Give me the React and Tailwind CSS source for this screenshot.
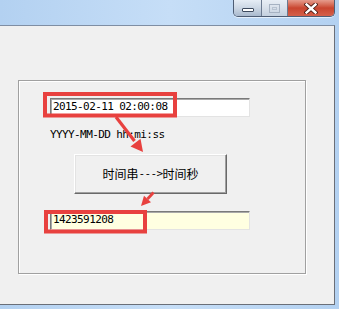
import React from "react";

const mono = { fontFamily: '"DejaVu Sans Mono", "Liberation Mono", monospace' };

function CaptionButtons() {
  return (
    <div className="flex h-[17px] rounded-b-[5px] border border-t-0 border-[#4e5d74] overflow-hidden shadow-[0_1px_0_rgba(255,255,255,0.6)]">
      <div className="flex w-[28px] items-end justify-center border-r border-[#6b7a90] bg-gradient-to-b from-[#e6edf5] via-[#ccd7e4] to-[#a9b9cd] pb-[4px]">
        <div className="h-[4px] w-[12px] rounded-[1px] border border-[#3d4a5e] bg-white" />
      </div>
      <div className="flex w-[26px] items-center justify-center border-r border-[#6b7a90] bg-gradient-to-b from-[#e8eef5] via-[#d8e0ea] to-[#c4d0de]">
        <div className="flex h-[9px] w-[11px] items-center justify-center border border-[#a6b2c2]">
          <div className="h-[3px] w-[5px] border border-[#b8c3d1]" />
        </div>
      </div>
      <div className="flex w-[46px] items-center justify-center bg-gradient-to-b from-[#e59c8d] via-[#c9452f] to-[#d4604a]">
        <svg width="14" height="11" viewBox="0 0 14 11">
          <path d="M2.5 1.5 L11.5 9.5 M11.5 1.5 L2.5 9.5" stroke="#4a1a12" strokeWidth="4.2" strokeLinecap="square" />
          <path d="M2.5 1.5 L11.5 9.5 M11.5 1.5 L2.5 9.5" stroke="#ffffff" strokeWidth="2.4" strokeLinecap="square" />
        </svg>
      </div>
    </div>
  );
}

function TextBox({ value, className }) {
  return (
    <div
      className={`flex h-[19px] w-[200px] items-center border border-t-[#7a7a7a] border-l-[#7a7a7a] border-r-[#e3e3e3] border-b-[#e3e3e3] pl-[2px] text-[11px] tracking-[-0.6px] text-black shadow-[inset_1px_1px_0_#a9a9a9] ${className}`}
      style={mono}
    >
      {value}
    </div>
  );
}

function Annotations() {
  return (
    <svg className="pointer-events-none absolute left-0 top-0" width="339" height="309" viewBox="0 0 339 309">
      <rect x="45" y="94" width="130" height="21.5" fill="none" stroke="#e8413f" strokeWidth="4" />
      <rect x="46" y="212" width="99" height="19.5" fill="none" stroke="#e8413f" strokeWidth="4" />
      <path d="M116 117 L134.5 141" stroke="#e8413f" strokeWidth="3.2" />
      <path d="M143 152 L130.5 146.5 L140.5 138.8 Z" fill="#e8413f" />
      <path d="M153.5 192.5 L147.5 199" stroke="#e8413f" strokeWidth="2.8" />
      <path d="M141 206 L144 195.8 L151 202.2 Z" fill="#e8413f" />
    </svg>
  );
}

export default function App() {
  return (
    <div className="relative flex h-[309px] w-[339px] flex-col overflow-hidden bg-gradient-to-r from-[#b3d1f1] via-[#c6def7] to-[#b3d1f1]">
      <div className="flex h-[25px] justify-end pr-[4px]">
        <CaptionButtons />
      </div>

      <div className="mb-[4px] mr-[4px] flex-1 border-b border-r border-t border-b-[#6a6f78] border-r-[#6a6f78] border-t-[#7f8ea3] bg-[#f0f0f0]">
        <div className="ml-[18px] mt-[54px] flex h-[194px] w-[288px] flex-col border border-[#a0a0a0] pl-[31px] pt-[17px] shadow-[1px_1px_0_#ffffff,inset_1px_1px_0_#ffffff]">
          <TextBox value="2015-02-11 02:00:08" className="bg-white" />

          <p className="mt-[11px] h-[14px] text-[11px] leading-[14px] tracking-[-0.6px] text-black" style={mono}>
            YYYY-MM-DD hh:mi:ss
          </p>

          <button className="ml-[24px] mt-[12px] flex h-[40px] w-[153px] items-center justify-center border border-b-[#696969] border-l-[#ffffff] border-r-[#696969] border-t-[#ffffff] bg-[#f0f0f0] text-black shadow-[inset_-1px_-1px_0_#a0a0a0,inset_1px_1px_0_#e3e3e3]">
            <span className="text-[12px] leading-[14px]" style={{ fontFamily: '"Noto Sans CJK SC", sans-serif' }}>时间串</span>
            <span className="text-[11px] leading-[14px] tracking-[-0.6px]" style={mono}>---&gt;</span>
            <span className="text-[12px] leading-[14px]" style={{ fontFamily: '"Noto Sans CJK SC", sans-serif' }}>时间秒</span>
          </button>

          <TextBox value="1423591208" className="mt-[17px] bg-[#ffffe1]" />
        </div>
      </div>

      <Annotations />
    </div>
  );
}
